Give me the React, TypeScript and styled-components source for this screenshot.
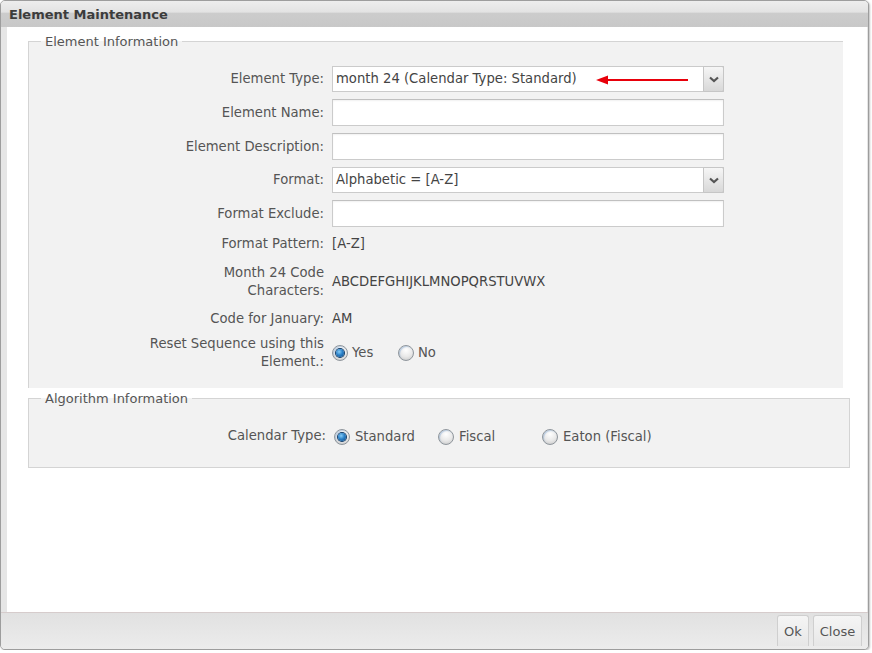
import React from "react";
import styled, { createGlobalStyle, css } from "styled-components";

const GlobalStyle = createGlobalStyle`
  html, body { margin: 0; padding: 0; background: #fff; }
  body {
    font-family: "DejaVu Sans", Verdana, sans-serif;
    font-size: 13.2px;
    color: #555;
  }
  * { box-sizing: border-box; }
`;

const Window = styled.div`
  width: 869px;
  height: 650px;
  border: 1px solid #9d9d9d;
  border-radius: 5px;
  background: #e6e6e6;
  box-shadow: 1px 1px 2px rgba(0, 0, 0, 0.25);
  display: flex;
  flex-direction: column;
  overflow: hidden;
`;

const TitleBar = styled.div`
  flex: none;
  height: 26px;
  padding-left: 8px;
  display: flex;
  align-items: center;
  font-size: 13px;
  font-weight: bold;
  color: #3c3c3c;
  background: linear-gradient(#ededed 0%, #e3e3e3 42%, #cccccc 48%, #c8c8c8 100%);
`;

const Body = styled.div`
  flex: 1;
  margin: 0 1px 0 6px;
  background: #fff;
  padding-top: 7px;
  display: flex;
  flex-direction: column;
  gap: 3px;
`;

const Fieldset = styled.fieldset<{ $w: number; $open?: boolean }>`
  margin: 0 0 0 21px;
  width: ${(p) => p.$w}px;
  padding: 0;
  min-width: 0;
  background: #f2f2f2;
  border: 1px solid #d4d4d4;
  ${(p) =>
    p.$open &&
    css`
      border-right: none;
      border-bottom: none;
    `}
`;

const Legend = styled.legend`
  margin-left: 12px;
  padding: 0 4px;
  font-size: 13px;
  line-height: 15px;
  color: #555;
`;

const Form = styled.div<{ $pt: number; $pb: number }>`
  padding: ${(p) => p.$pt}px 0 ${(p) => p.$pb}px;
`;

const Row = styled.div<{ $h: number; $label?: number }>`
  height: ${(p) => p.$h}px;
  display: grid;
  grid-template-columns: ${(p) => p.$label ?? 295}px 392px;
  column-gap: 8px;
  align-items: center;
`;

const Label = styled.div`
  text-align: right;
  line-height: 18px;
  color: #555;
`;

const Value = styled.div`
  line-height: 18px;
  color: #444;
`;

const TextInput = styled.input`
  width: 392px;
  height: 27px;
  margin: 0;
  border: 1px solid #cbcbcb;
  border-top-color: #c0c0c0;
  background: #fff;
  box-shadow: inset 0 1px 2px rgba(0, 0, 0, 0.06);
  font: inherit;
  outline: none;
`;

const SelectBox = styled.div`
  position: relative;
  width: 392px;
  height: 26px;
  border: 1px solid #cbcbcb;
  background: #fff;
  display: flex;
  align-items: center;
`;

const SelectText = styled.span`
  flex: 1;
  padding-left: 3px;
  color: #444;
  line-height: 18px;
  white-space: nowrap;
`;

const DropButton = styled.span`
  flex: none;
  width: 21px;
  align-self: stretch;
  margin: -1px -1px -1px 0;
  border: 1px solid #c6c6c6;
  border-radius: 0 2px 2px 0;
  background: linear-gradient(#f6f6f6, #d8d8d8);
  display: flex;
  align-items: center;
  justify-content: center;
`;

const Arrow = styled.svg`
  position: absolute;
  left: 263px;
  top: 8px;
`;

const Options = styled.div`
  display: flex;
  align-items: center;
  padding-top: 1px;
`;

const Option = styled.label<{ $w: number }>`
  width: ${(p) => p.$w}px;
  display: inline-flex;
  align-items: center;
  gap: ${(p) => (p.$w > 80 ? 5 : 4)}px;
  color: #555;
  line-height: 18px;
  white-space: nowrap;
`;

const RadioDot = styled.span<{ $on?: boolean }>`
  position: relative;
  flex: none;
  width: 16px;
  height: 16px;
  border-radius: 50%;
  border: 1px solid #8f969c;
  background: radial-gradient(circle at 50% 30%, #ffffff 0%, #e8e8e8 55%, #c2c2c2 100%);
  box-shadow: inset 1px 1px 1px rgba(90, 140, 200, 0.35);
  ${(p) =>
    p.$on &&
    css`
      &::after {
        content: "";
        position: absolute;
        left: 3px;
        top: 3px;
        width: 8px;
        height: 8px;
        border-radius: 50%;
        background: radial-gradient(circle at 40% 35%, #86cdf7 0%, #2c82c9 45%, #0f4a86 100%);
        box-shadow: 0 0 0 1px #103c68;
      }
    `}
`;

const Footer = styled.div`
  flex: none;
  height: 37px;
  border-top: 1px solid #d6cccc;
  background: linear-gradient(#e1e1e1, #ececec);
  display: flex;
  justify-content: flex-end;
  align-items: flex-start;
  gap: 4px;
  padding: 2px 6px 0 0;
`;

const Button = styled.button<{ $w: number }>`
  width: ${(p) => p.$w}px;
  height: 31px;
  margin: 0;
  padding: 0;
  border: 1px solid #cfcfcf;
  border-bottom: none;
  border-radius: 3px 3px 0 0;
  background: linear-gradient(#f5f5f5, #e7e7e7);
  font: inherit;
  font-size: 13px;
  color: #555;
  cursor: pointer;
`;

function Radio({ on, label, w }: { on?: boolean; label: string; w: number }) {
  return (
    <Option $w={w}>
      <RadioDot $on={on} />
      {label}
    </Option>
  );
}

function Select({ value, arrow }: { value: string; arrow?: boolean }) {
  return (
    <SelectBox>
      <SelectText>{value}</SelectText>
      <DropButton>
        <svg width="10" height="7" viewBox="0 0 10 7">
          <polyline points="1,1.5 5,5 9,1.5" fill="none" stroke="#555" strokeWidth="2.2" />
        </svg>
      </DropButton>
      {arrow && (
        <Arrow width="93" height="10" viewBox="0 0 93 10">
          <polygon points="0,5 12,0.5 12,9.5" fill="#e8000b" />
          <rect x="10" y="4" width="82" height="2" fill="#e8000b" />
        </Arrow>
      )}
    </SelectBox>
  );
}

export default function App() {
  return (
    <>
      <GlobalStyle />
      <Window>
        <TitleBar>Element Maintenance</TitleBar>
        <Body>
          <Fieldset $w={815} $open>
            <Legend>Element Information</Legend>
            <Form $pt={13.5} $pb={13}>
              <Row $h={33.5}>
                <Label>Element Type:</Label>
                <Select value="month 24 (Calendar Type: Standard)" arrow />
              </Row>
              <Row $h={33.5}>
                <Label>Element Name:</Label>
                <TextInput />
              </Row>
              <Row $h={34}>
                <Label>Element Description:</Label>
                <TextInput />
              </Row>
              <Row $h={33.5}>
                <Label>Format:</Label>
                <Select value="Alphabetic = [A-Z]" />
              </Row>
              <Row $h={33.5}>
                <Label>Format Exclude:</Label>
                <TextInput />
              </Row>
              <Row $h={26.5}>
                <Label>Format Pattern:</Label>
                <Value>[A-Z]</Value>
              </Row>
              <Row $h={49.5}>
                <Label>
                  Month 24 Code
                  <br />
                  Characters:
                </Label>
                <Value>ABCDEFGHIJKLMNOPQRSTUVWX</Value>
              </Row>
              <Row $h={24.5}>
                <Label>Code for January:</Label>
                <Value>AM</Value>
              </Row>
              <Row $h={43.5}>
                <Label>
                  Reset Sequence using this
                  <br />
                  Element.:
                </Label>
                <Options>
                  <Radio on label="Yes" w={66} />
                  <Radio label="No" w={60} />
                </Options>
              </Row>
            </Form>
          </Fieldset>
          <Fieldset $w={822}>
            <Legend>Algorithm Information</Legend>
            <Form $pt={13.5} $pb={14}>
              <Row $h={34} $label={297}>
                <Label>Calendar Type:</Label>
                <Options>
                  <Radio on label="Standard" w={104} />
                  <Radio label="Fiscal" w={104} />
                  <Radio label="Eaton (Fiscal)" w={120} />
                </Options>
              </Row>
            </Form>
          </Fieldset>
        </Body>
        <Footer>
          <Button $w={32}>Ok</Button>
          <Button $w={49}>Close</Button>
        </Footer>
      </Window>
    </>
  );
}
